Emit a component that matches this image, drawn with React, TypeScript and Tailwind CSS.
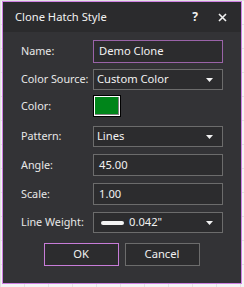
import React from "react";

const font = { fontFamily: '"Noto Sans", "Open Sans", sans-serif' };

function Arrow() {
  return (
    <svg width="7" height="4" viewBox="0 0 7 4" className="absolute right-[9px] top-1/2 -translate-y-1/2">
      <polygon points="0,0 7,0 3.5,4" fill="#f2f2f2" />
    </svg>
  );
}

function Label({ children }: { children: React.ReactNode }) {
  return <div className="w-[72px] whitespace-nowrap text-[10.8px] text-[#e8e8e8] leading-none">{children}</div>;
}

export default function App() {
  return (
    <div
      className="w-[244px] h-[287px] bg-[#f4f4f4] bg-[linear-gradient(to_right,#e2e2e2_1px,transparent_1px),linear-gradient(to_bottom,#e2e2e2_1px,transparent_1px)] bg-[size:24px_24px] pt-[1px] pl-[2px]"
      style={font}
    >
      <div className="w-[240px] h-[283px] border border-[#cf80e3] bg-[#333336] flex flex-col">
        <div className="h-[30px] bg-[#2b2b2d] flex items-center pl-[12px] pr-[14px] shrink-0">
          <span className="text-[11.2px] text-[#f2f2f2] flex-1 whitespace-nowrap">Clone Hatch Style</span>
          <span className="text-[12px] font-bold text-[#f2f2f2] mr-[20px]">?</span>
          <svg width="9" height="9" viewBox="0 0 9 9">
            <path d="M1 1 L8 8 M8 1 L1 8" stroke="#f2f2f2" strokeWidth="1.6" />
          </svg>
        </div>
        <div className="pl-[18px] flex flex-col">
          <div className="flex items-center mt-[8px]">
            <Label>Name:</Label>
            <div className="w-[130px] h-[23px] border border-[#9a63a8] bg-[#2c2c2e] flex items-center pl-[5px] text-[11.2px] text-[#f2f2f2] whitespace-nowrap">
              Demo Clone
            </div>
          </div>
          <div className="flex items-center mt-[6px]">
            <Label>Color Source:</Label>
            <div className="relative w-[130px] h-[21px] border border-[#6c6c6c] bg-[#2c2c2e] flex items-center pl-[3px] text-[11.2px] text-[#f2f2f2] whitespace-nowrap">
              Custom Color
              <Arrow />
            </div>
          </div>
          <div className="flex items-center mt-[5px]">
            <Label>Color:</Label>
            <div className="w-[28px] h-[22px] border border-[#000] bg-[#ffffff] p-[1px]">
              <div className="w-full h-full bg-[#00851a] border-r border-b border-[#808080]" />
            </div>
          </div>
          <div className="flex items-center mt-[9px]">
            <Label>Pattern:</Label>
            <div className="relative w-[130px] h-[21px] border border-[#6c6c6c] bg-[#2c2c2e] flex items-center pl-[3px] text-[11.2px] text-[#f2f2f2]">
              Lines
              <Arrow />
            </div>
          </div>
          <div className="flex items-center mt-[7px]">
            <Label>Angle:</Label>
            <div className="w-[130px] h-[22px] border border-[#6c6c6c] bg-[#2c2c2e] flex items-center pl-[5px] text-[11.2px] text-[#f2f2f2]">
              45.00
            </div>
          </div>
          <div className="flex items-center mt-[7px]">
            <Label>Scale:</Label>
            <div className="w-[130px] h-[22px] border border-[#6c6c6c] bg-[#2c2c2e] flex items-center pl-[5px] text-[11.2px] text-[#f2f2f2]">
              1.00
            </div>
          </div>
          <div className="flex items-center mt-[7px]">
            <Label>Line Weight:</Label>
            <div className="relative w-[130px] h-[21px] border border-[#6c6c6c] bg-[#2c2c2e] flex items-center pl-[7px] text-[11.2px] text-[#f2f2f2] whitespace-nowrap">
              <div className="w-[23px] h-[4px] rounded-full bg-[#f4f4f4] mr-[5px]" />
              0.042"
              <Arrow />
            </div>
          </div>
        </div>
        <div className="flex justify-center gap-[6px] mt-[10px] pr-[1px]">
          <div className="w-[75px] h-[23px] border border-[#c77cd8] bg-[#2c2c2e] flex items-center justify-center text-[11.2px] text-[#f2f2f2]">
            OK
          </div>
          <div className="w-[75px] h-[23px] border border-[#6c6c6c] bg-[#2c2c2e] flex items-center justify-center text-[11.2px] text-[#f2f2f2]">
            Cancel
          </div>
        </div>
      </div>
    </div>
  );
}
